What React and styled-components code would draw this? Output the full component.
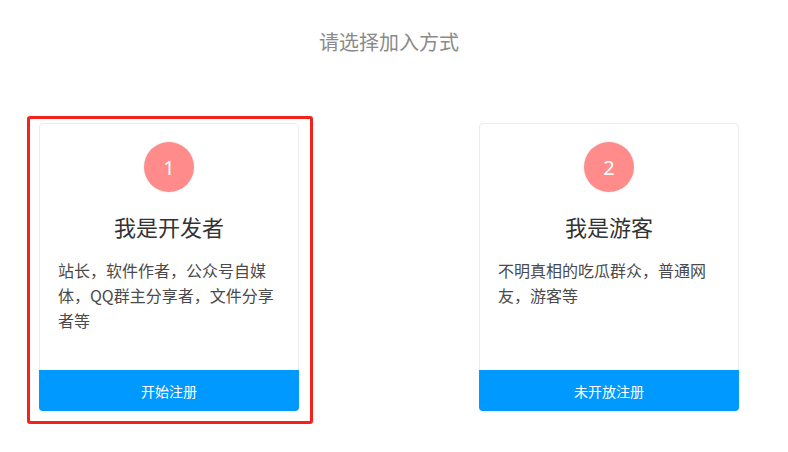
import React from "react";
import styled, { createGlobalStyle } from "styled-components";

const Global = createGlobalStyle`
  html, body { margin: 0; padding: 0; background: #fff; }
  body { font-family: "Noto Sans CJK SC", "Noto Sans", sans-serif; }
  * { box-sizing: border-box; }
`;

const Page = styled.div`
  width: 778px;
  padding-top: 28px;
`;

const Heading = styled.h2`
  margin: 0;
  font-size: 20px;
  line-height: 28px;
  font-weight: 400;
  color: #8a8a8a;
  text-align: center;
`;

const Row = styled.div`
  display: flex;
  gap: 154px;
  margin-top: 60px;
  padding-left: 27px;
`;

const Choice = styled.div`
  border: 3px solid ${(p) => (p.$active ? "#f5221b" : "transparent")};
  border-radius: 3px;
  padding: 4px 11px 10px 9px;
`;

const Card = styled.div`
  width: 260px;
  height: 288px;
  border: 1px solid #ececec;
  border-radius: 4px;
  display: flex;
  flex-direction: column;
  align-items: center;
  padding-top: 18px;
  background: #fff;
`;

const Badge = styled.div`
  width: 50px;
  height: 50px;
  border-radius: 50%;
  background: #ff8b8b;
  box-shadow: 0 0 2px rgba(0, 0, 0, 0.12);
  color: #fff;
  font-family: "Noto Sans", "Open Sans", sans-serif;
  font-size: 20px;
  display: flex;
  align-items: center;
  justify-content: center;
`;

const Title = styled.h3`
  margin: 19px 0 17px;
  font-size: 22px;
  line-height: 30px;
  font-weight: 400;
  color: #333;
`;

const Desc = styled.p`
  margin: 0;
  align-self: stretch;
  padding: 0 20px 0 18px;
  font-size: 16px;
  line-height: 25px;
  color: #4a4a4a;
`;

const Action = styled.button`
  margin: auto -1px -1px;
  width: calc(100% + 2px);
  height: 41px;
  border: none;
  border-radius: 0 0 4px 4px;
  background: #0099ff;
  color: #fff;
  font-family: "Noto Sans CJK SC", sans-serif;
  font-size: 14px;
  cursor: pointer;
`;

const options = [
  {
    n: 1,
    title: "我是开发者",
    desc: "站长，软件作者，公众号自媒体，QQ群主分享者，文件分享者等",
    action: "开始注册",
    active: true,
  },
  {
    n: 2,
    title: "我是游客",
    desc: "不明真相的吃瓜群众，普通网友，游客等",
    action: "未开放注册",
    active: false,
  },
];

export default function App() {
  return (
    <>
      <Global />
      <Page>
        <Heading>请选择加入方式</Heading>
        <Row>
          {options.map((o) => (
            <Choice key={o.n} $active={o.active}>
              <Card>
                <Badge>{o.n}</Badge>
                <Title>{o.title}</Title>
                <Desc>{o.desc}</Desc>
                <Action>{o.action}</Action>
              </Card>
            </Choice>
          ))}
        </Row>
      </Page>
    </>
  );
}
